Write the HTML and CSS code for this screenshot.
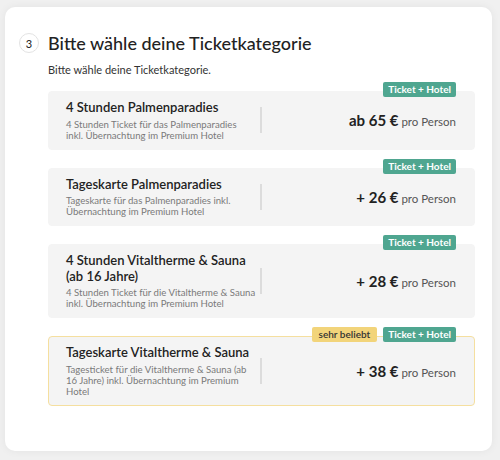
FILE: index.html
```html
<!DOCTYPE html>
<html lang="de">
<head>
    <meta charset="UTF-8">
    <meta name="viewport" content="width=device-width, initial-scale=1.0">
    <title>Ticketkategorie</title>
    <link rel="stylesheet" href="styles.css">
</head>
<body>
    <div id="panel">
        <div class="step-head">
            <div class="step-num">3</div>
            <h2>Bitte wähle deine Ticketkategorie</h2>
        </div>
        <p class="step-intro">Bitte wähle deine Ticketkategorie.</p>

        <div id="tickets">
            <div class="ticket">
                <div class="badges"><span class="badge hotel">Ticket + Hotel</span></div>
                <div class="info">
                    <div class="name">4 Stunden Palmenparadies</div>
                    <div class="desc">4 Stunden Ticket für das Palmenparadies<br>inkl. Übernachtung im Premium Hotel</div>
                </div>
                <div class="price"><b>ab 65 €</b> pro Person</div>
            </div>

            <div class="ticket">
                <div class="badges"><span class="badge hotel">Ticket + Hotel</span></div>
                <div class="info">
                    <div class="name">Tageskarte Palmenparadies</div>
                    <div class="desc">Tageskarte für das Palmenparadies inkl.<br>Übernachtung im Premium Hotel</div>
                </div>
                <div class="price"><b>+ 26 €</b> pro Person</div>
            </div>

            <div class="ticket">
                <div class="badges"><span class="badge hotel">Ticket + Hotel</span></div>
                <div class="info">
                    <div class="name">4 Stunden Vitaltherme &amp; Sauna<br>(ab 16 Jahre)</div>
                    <div class="desc">4 Stunden Ticket für die Vitaltherme &amp; Sauna<br>inkl. Übernachtung im Premium Hotel</div>
                </div>
                <div class="price"><b>+ 28 €</b> pro Person</div>
            </div>

            <div class="ticket popular">
                <div class="badges">
                    <span class="badge hot">sehr beliebt</span>
                    <span class="badge hotel">Ticket + Hotel</span>
                </div>
                <div class="info">
                    <div class="name">Tageskarte Vitaltherme &amp; Sauna</div>
                    <div class="desc">Tagesticket für die Vitaltherme &amp; Sauna (ab<br>16 Jahre) inkl. Übernachtung im Premium<br>Hotel</div>
                </div>
                <div class="price"><b>+ 38 €</b> pro Person</div>
            </div>
        </div>
    </div>
</body>
</html>
```

FILE: styles.css
```css
body {
    font-family: 'Lato', 'Liberation Sans', sans-serif;
    background-color: #f0f0f0;
    color: #222;
    margin: 0;
    padding: 7px 8px 8px 5px;
}

#panel {
    background-color: #fff;
    border-radius: 10px;
    box-shadow: 0 0 8px rgba(0, 0, 0, 0.06);
    height: 444px;
    box-sizing: border-box;
    padding: 26px 17px 0 14px;
}

.step-head {
    display: flex;
    align-items: center;
    gap: 9px;
}

.step-num {
    width: 18px;
    height: 18px;
    border: 1px solid #e3e3e3;
    border-radius: 50%;
    font-size: 11px;
    display: flex;
    align-items: center;
    justify-content: center;
}

h2 {
    margin: 0;
    font-size: 18px;
    font-weight: 500;
    line-height: 20px;
}

.step-intro {
    margin: 10px 0 0 29px;
    font-size: 11px;
    line-height: 14px;
    color: #333;
}

#tickets {
    margin: 14px 0 0 29px;
    display: flex;
    flex-direction: column;
    gap: 18px;
}

.ticket {
    position: relative;
    background-color: #f4f4f4;
    border: 1px solid #f4f4f4;
    border-radius: 4px;
    display: flex;
    align-items: center;
    padding: 8px 18px 8px 17px;
}

.ticket.popular {
    border-color: #f5df9f;
}

.badges {
    position: absolute;
    top: -10px;
    right: 18px;
    display: flex;
    gap: 6px;
}

.badge {
    font-size: 10px;
    font-weight: 700;
    line-height: 15px;
    padding: 0 5px;
    border-radius: 2px;
}

.badge.hotel {
    background-color: #4fa690;
    color: #fff;
}

.badge.hot {
    background-color: #f2d47a;
    color: #333;
    font-weight: 600;
    padding: 0 7px;
}

.info {
    width: 195px;
    position: relative;
}

.info::after {
    content: '';
    position: absolute;
    right: -1px;
    top: 50%;
    height: 26px;
    margin-top: -13px;
    width: 2px;
    background-color: #dcdcdc;
}

.name {
    font-size: 13px;
    font-weight: 600;
    line-height: 15.5px;
}

.desc {
    font-size: 9.6px;
    color: #7a7a7a;
    line-height: 11px;
    margin-top: 3px;
}

.price {
    flex: 1;
    text-align: right;
    font-size: 11.5px;
    color: #555;
}

.price b {
    font-size: 15px;
    font-weight: 700;
    color: #222;
}
```
